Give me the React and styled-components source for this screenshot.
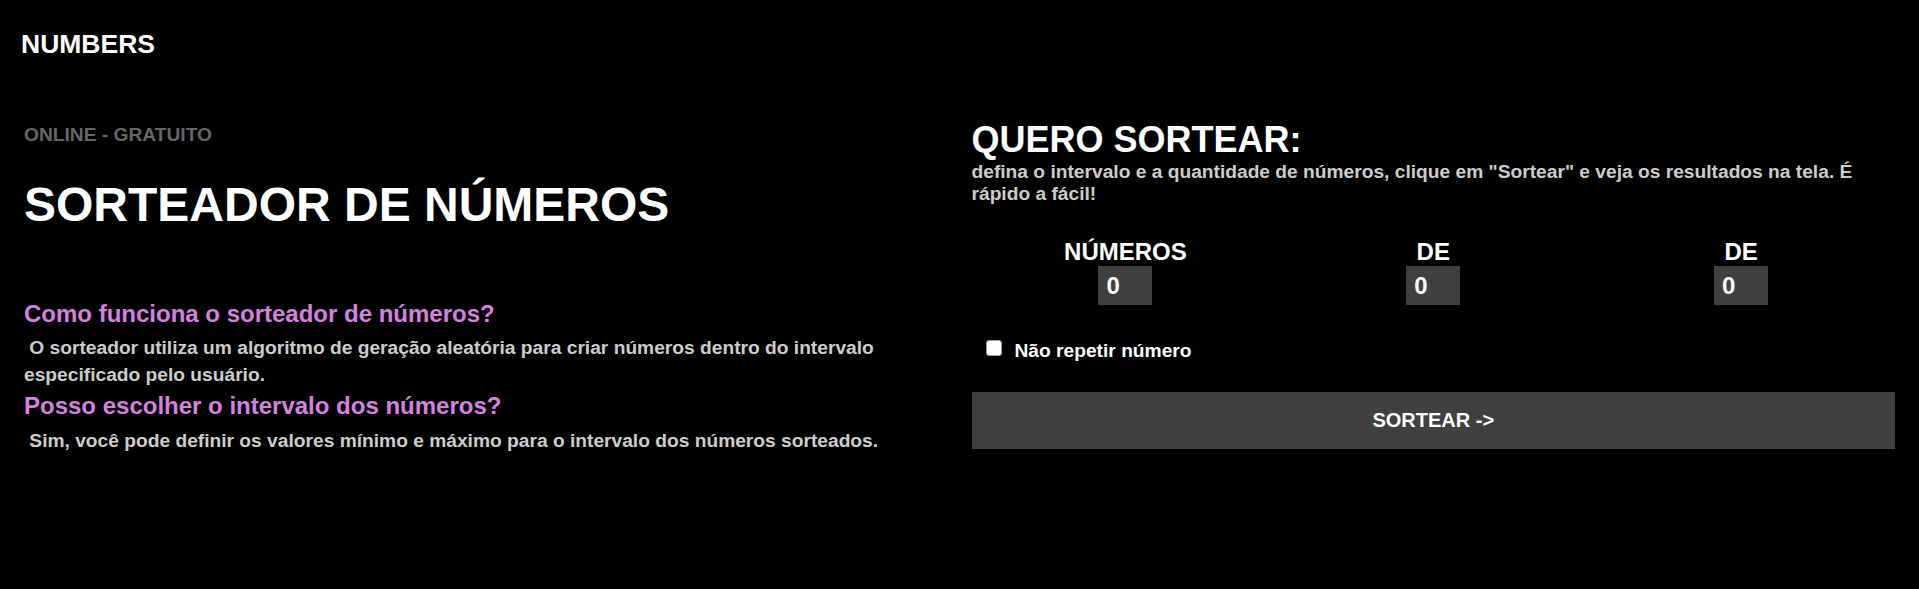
import React, { useState } from "react";
import styled, { createGlobalStyle } from "styled-components";

const GlobalStyle = createGlobalStyle`
  html, body {
    margin: 0;
    background: #000;
  }
  body {
    font-family: "Liberation Sans", Arial, Helvetica, sans-serif;
    font-weight: 700;
    color: #fff;
  }
`;

const faq = [
  {
    q: "Como funciona o sorteador de números?",
    a: "\u00a0O sorteador utiliza um algoritmo de geração aleatória para criar números dentro do intervalo especificado pelo usuário.",
  },
  {
    q: "Posso escolher o intervalo dos números?",
    a: "\u00a0Sim, você pode definir os valores mínimo e máximo para o intervalo dos números sorteados.",
  },
];

const App = () => {
  const [values, setValues] = useState({ amount: 0, from: 0, to: 0 });
  const [noRepeat, setNoRepeat] = useState(false);

  const handleChange = (e) => {
    const { name, value } = e.target;
    setValues({ ...values, [name]: value });
  };

  return (
    <>
      <GlobalStyle />
      <Header>
        <Logo>NUMBERS</Logo>
      </Header>
      <Main>
        <InfoColumn>
          <Eyebrow>ONLINE - GRATUITO</Eyebrow>
          <Title>SORTEADOR DE NÚMEROS</Title>
          <FaqList>
            {faq.map((item) => (
              <FaqItem key={item.q}>
                <FaqQuestion>{item.q}</FaqQuestion>
                <FaqAnswer>{item.a}</FaqAnswer>
              </FaqItem>
            ))}
          </FaqList>
        </InfoColumn>

        <DrawColumn>
          <DrawTitle>QUERO SORTEAR:</DrawTitle>
          <DrawHint>
            defina o intervalo e a quantidade de números, clique em "Sortear" e
            veja os resultados na tela. É rápido a fácil!
          </DrawHint>
          <Fields>
            <Field>
              <FieldLabel htmlFor="amount">NÚMEROS</FieldLabel>
              <NumberInput
                id="amount"
                name="amount"
                type="number"
                value={values.amount}
                onChange={handleChange}
              />
            </Field>
            <Field>
              <FieldLabel htmlFor="from">DE</FieldLabel>
              <NumberInput
                id="from"
                name="from"
                type="number"
                value={values.from}
                onChange={handleChange}
              />
            </Field>
            <Field>
              <FieldLabel htmlFor="to">DE</FieldLabel>
              <NumberInput
                id="to"
                name="to"
                type="number"
                value={values.to}
                onChange={handleChange}
              />
            </Field>
          </Fields>
          <OptionRow>
            <Checkbox
              type="checkbox"
              id="norepeat"
              checked={noRepeat}
              onChange={() => setNoRepeat(!noRepeat)}
            />
            <OptionLabel htmlFor="norepeat">Não repetir número</OptionLabel>
          </OptionRow>
          <DrawButton type="button">SORTEAR -&gt;</DrawButton>
        </DrawColumn>
      </Main>
    </>
  );
};

export default App;

const Header = styled.header`
  padding: 29px 0 0 21px;
`;

const Logo = styled.div`
  font-size: 26.5px;
  line-height: 30px;
  font-weight: 700;
`;

const Main = styled.main`
  display: grid;
  grid-template-columns: 1fr 1fr;
  column-gap: 24px;
  padding: 0 24px;
  margin-top: 61px;
`;

const InfoColumn = styled.section`
  padding-top: 4px;
`;

const Eyebrow = styled.h3`
  margin: 0;
  font-size: 19.2px;
  line-height: 21.5px;
  color: #666;
`;

const Title = styled.h1`
  margin: 31px 0 0;
  font-size: 48px;
  line-height: 55px;
`;

const FaqList = styled.div`
  margin-top: 68px;
  display: flex;
  flex-direction: column;
  gap: 4px;
`;

const FaqItem = styled.div``;

const FaqQuestion = styled.h2`
  margin: 0 0 7px;
  font-size: 24px;
  line-height: 27.6px;
  color: #d680e0;
`;

const FaqAnswer = styled.p`
  margin: 0;
  font-size: 19.2px;
  line-height: 27px;
  color: #ccc;
`;

const DrawColumn = styled.section``;

const DrawTitle = styled.h2`
  margin: 0;
  font-size: 36px;
  line-height: 40px;
`;

const DrawHint = styled.p`
  margin: 1px 0 0;
  font-size: 19.2px;
  line-height: 22px;
  color: #ccc;
`;

const Fields = styled.div`
  display: grid;
  grid-template-columns: repeat(3, 1fr);
  margin-top: 33px;
`;

const Field = styled.div`
  display: flex;
  flex-direction: column;
  align-items: center;
`;

const FieldLabel = styled.label`
  font-size: 24px;
  line-height: 28px;
`;

const NumberInput = styled.input`
  box-sizing: border-box;
  width: 54px;
  height: 39px;
  padding: 0 8px;
  border: none;
  outline: none;
  background: #404040;
  color: #fff;
  font-family: inherit;
  font-size: 24px;
  font-weight: 700;
  -moz-appearance: textfield;

  &::-webkit-inner-spin-button,
  &::-webkit-outer-spin-button {
    -webkit-appearance: none;
    margin: 0;
  }
`;

const OptionRow = styled.div`
  display: flex;
  align-items: flex-start;
  gap: 13px;
  margin-top: 35px;
  padding-left: 14px;
  font-size: 19.2px;
  line-height: 22px;
`;

const Checkbox = styled.input`
  appearance: none;
  box-sizing: border-box;
  flex: none;
  width: 16px;
  height: 16px;
  margin: 0;
  background: #fff;
  border: 1px solid #9a9a9a;
  border-radius: 3px;
  cursor: pointer;

  &:checked {
    background: #0075ff;
    border-color: #0075ff;
  }
`;

const OptionLabel = styled.label``;

const DrawButton = styled.button`
  display: block;
  width: 100%;
  height: 57px;
  margin-top: 30px;
  border: none;
  background: #404040;
  color: #fff;
  font-family: inherit;
  font-size: 20px;
  font-weight: 700;
  cursor: pointer;
`;
